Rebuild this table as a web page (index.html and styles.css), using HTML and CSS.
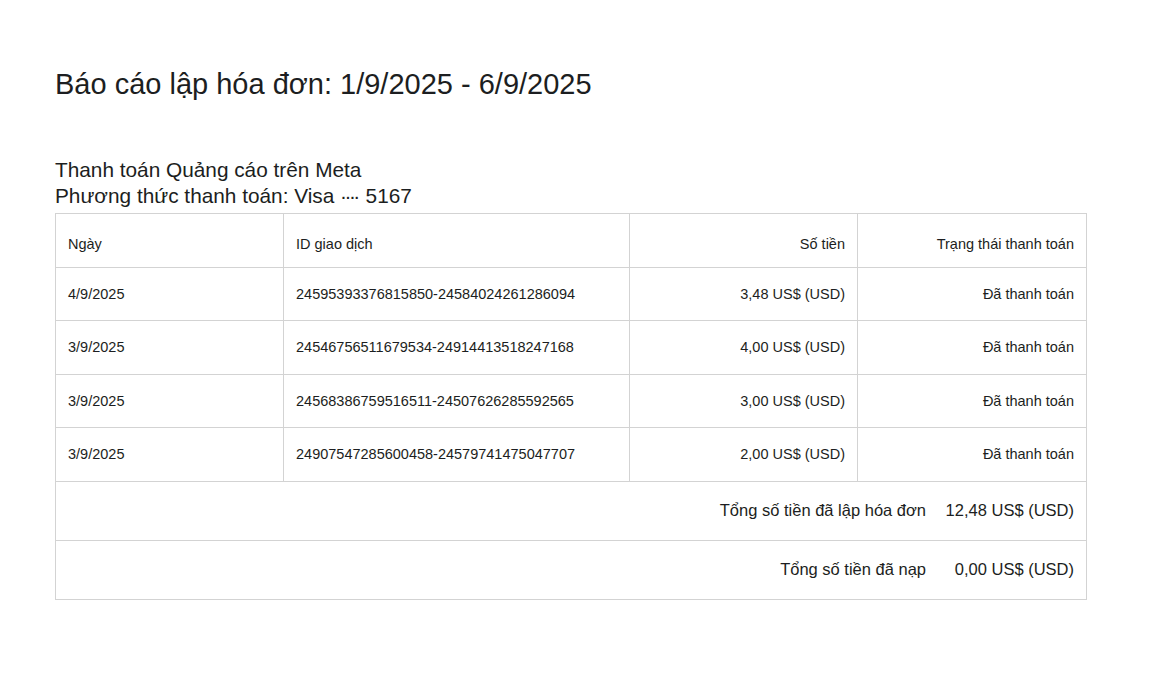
FILE: index.html
```html
<!DOCTYPE html>
<html lang="vi">
<head>
<meta charset="utf-8">
<link rel="stylesheet" href="styles.css">
</head>
<body>
<div class="page">
  <h1 class="title">Báo cáo lập hóa đơn: 1/9/2025 - 6/9/2025</h1>
  <div class="info">
    <div>Thanh toán Quảng cáo trên Meta</div>
    <div>Phương thức thanh toán: Visa <span class="dots">····</span> 5167</div>
  </div>
  <table class="report">
    <colgroup>
      <col class="c1"><col class="c2"><col class="c3"><col class="c4">
    </colgroup>
    <thead>
      <tr>
        <th class="left">Ngày</th>
        <th class="left">ID giao dịch</th>
        <th class="right">Số tiền</th>
        <th class="right">Trạng thái thanh toán</th>
      </tr>
    </thead>
    <tbody>
      <tr><td>4/9/2025</td><td>24595393376815850-24584024261286094</td><td class="right">3,48 US$ (USD)</td><td class="right">Đã thanh toán</td></tr>
      <tr><td>3/9/2025</td><td>24546756511679534-24914413518247168</td><td class="right">4,00 US$ (USD)</td><td class="right">Đã thanh toán</td></tr>
      <tr><td>3/9/2025</td><td>24568386759516511-24507626285592565</td><td class="right">3,00 US$ (USD)</td><td class="right">Đã thanh toán</td></tr>
      <tr><td>3/9/2025</td><td>24907547285600458-24579741475047707</td><td class="right">2,00 US$ (USD)</td><td class="right">Đã thanh toán</td></tr>
      <tr class="sum"><td colspan="4"><div class="sumrow"><span>Tổng số tiền đã lập hóa đơn</span><span class="amount">12,48 US$ (USD)</span></div></td></tr>
      <tr class="sum"><td colspan="4"><div class="sumrow"><span>Tổng số tiền đã nạp</span><span class="amount">0,00 US$ (USD)</span></div></td></tr>
    </tbody>
  </table>
</div>
</body>
</html>
```
FILE: styles.css
```css
html, body {
  margin: 0;
  padding: 0;
  background: #ffffff;
}
body {
  font-family: "Liberation Sans", Arial, sans-serif;
  color: #1c1e21;
}
.page {
  padding: 66px 84px 0 55px;
}
.title {
  margin: 0;
  font-size: 29px;
  font-weight: normal;
  line-height: 36px;
}
.info {
  margin-top: 55px;
  font-size: 20.8px;
  line-height: 26px;
}
.dots {
  letter-spacing: -2.5px;
  margin-right: 2px;
}
.report {
  width: 1031px;
  border-collapse: collapse;
  table-layout: fixed;
  font-size: 14.5px;
  margin-top: 4px;
}
.c1 { width: 228px; }
.c2 { width: 346px; }
.c3 { width: 228px; }
.c4 { width: 229px; }
.report th, .report td {
  border: 1px solid #d3d3d3;
  padding: 0 12px;
  height: 52.5px;
  font-weight: normal;
  vertical-align: middle;
}
.report th {
  padding-top: 7px;
  height: 45.5px;
}
.left { text-align: left; }
.right { text-align: right; }
.report tr.sum td {
  height: 58px;
  font-size: 16.5px;
}
.sumrow {
  display: flex;
  justify-content: flex-end;
  gap: 19px;
}
.amount {
  min-width: 129px;
  text-align: right;
}
```
